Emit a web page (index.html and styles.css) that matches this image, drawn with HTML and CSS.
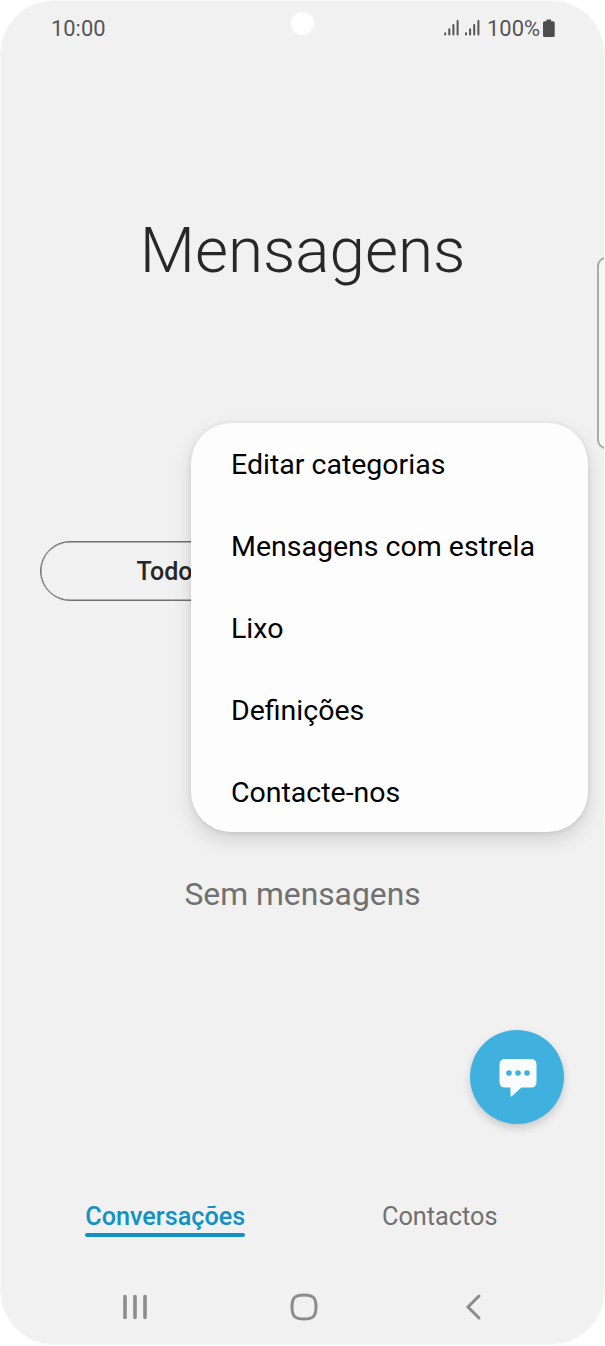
FILE: index.html
```html
<!DOCTYPE html>
<html lang="pt">
<head>
<meta charset="utf-8">
<title>Mensagens</title>
<link rel="stylesheet" href="styles.css">
</head>
<body>
<div class="screen">
  <header class="status">
    <span class="clock">10:00</span>
    <div class="indicators">
      <svg class="signals" width="38" height="18" viewBox="0 0 38 18" fill="none" stroke="#555" stroke-width="2" stroke-linecap="round">
        <path d="M2.200 14.300v1.200M6.300 10.300v5.200M10.400 6v9.500M14.600 2v13.500M23 14.300v1.200M27.100 10.300v5.200M31.200 6v9.500M35.400 2v13.500"/>
      </svg>
      <span class="percent">100%</span>
      <svg class="battery" width="12" height="18" viewBox="0 0 12 18" fill="#4d4d4d">
        <path d="M3.500 0.600h4.600v1.700H10.200q1.500 0 1.500 1.500v12.700q0 1.500-1.500 1.500H1.500Q0 18 0 16.500V3.800Q0 2.300 1.500 2.300h2z"/>
      </svg>
    </div>
    <span class="camera"></span>
  </header>
  <h1 class="title">Mensagens</h1>
  <main class="content">
    <div class="chip">Todos</div>
    <p class="empty">Sem mensagens</p>
  </main>
  <nav class="tabs">
    <div class="tab"><span class="label active">Conversações</span></div>
    <div class="tab"><span class="label">Contactos</span></div>
  </nav>
  <footer class="navbar">
    <svg class="recents" width="26" height="28" viewBox="0 0 26 28" fill="none" stroke="#8c8c8c" stroke-width="3.600" stroke-linecap="round"><path d="M3 3.500v21M13 3.500v21M23 3.500v21"/></svg>
    <svg class="home" width="28" height="28" viewBox="0 0 28 28" fill="none" stroke="#8c8c8c" stroke-width="3"><path d="M14 2c9.200 0 12 2.800 12 12s-2.800 12-12 12S2 23.200 2 14 4.800 2 14 2z"/></svg>
    <svg class="back" width="18" height="28" viewBox="0 0 18 28" fill="none" stroke="#8c8c8c" stroke-width="3" stroke-linecap="round"><path d="M15 3L4 14l11 11"/></svg>
  </footer>
  <div class="edge-handle"></div>
  <div class="menu">
    <div class="item">Editar categorias</div>
    <div class="item">Mensagens com estrela</div>
    <div class="item">Lixo</div>
    <div class="item">Definições</div>
    <div class="item">Contacte-nos</div>
  </div>
  <div class="fab">
    <svg width="38" height="38" viewBox="0 0 38 38">
      <path fill="#fafdff" d="M6 0H32q5.500 0 5.500 5.500V23q0 5.500-5.500 5.500H22.500L12.800 37.200q-1.300.8-1.300-.8V28.500H6Q.5 28.500.5 23V5.500Q.5 0 6 0z"/>
      <g fill="#40b0df"><circle cx="10" cy="14" r="2.800"/><circle cx="19" cy="14" r="2.800"/><circle cx="28" cy="14" r="2.800"/></g>
    </svg>
  </div>
</div>
</body>
</html>
```
FILE: styles.css
```css
* { box-sizing: border-box; margin: 0; padding: 0; }
body { background: #fff; font-family: Roboto, "Liberation Sans", sans-serif; }
svg { display: block; }
.screen {
  position: relative;
  display: flex;
  flex-direction: column;
  width: 605px;
  height: 1345px;
  overflow: hidden;
  border: 1px solid #f8f8f8;
  border-radius: 54px;
  background: #f1f1f1;
}
.status {
  position: relative;
  display: flex;
  justify-content: space-between;
  height: 56px;
  padding: 0 49px 2px 50px;
  align-items: center;
  font-size: 21.9px;
  color: #555;
}
.indicators { display: flex; align-items: center; }
.percent { margin: 0 3px 0 6px; }
.battery { margin-top: -1px; }
.camera {
  position: absolute;
  top: 11px;
  left: 290px;
  width: 23px;
  height: 23px;
  border-radius: 50%;
  background: #fff;
}
.title {
  height: 484px;
  padding-top: 154px;
  font-size: 63.8px;
  font-weight: 300;
  line-height: 80px;
  text-align: center;
  color: #282828;
}
.content { height: 629px; }
.chip {
  width: 262px;
  height: 60px;
  margin-left: 39px;
  border: 1px solid #707070;
  box-shadow: inset 0 0 0 .5px #707070;
  border-radius: 30px;
  font-size: 25px;
  font-weight: 500;
  line-height: 60px;
  text-align: center;
  color: #262626;
}
.empty {
  margin-top: 273px;
  font-size: 31.8px;
  line-height: 40px;
  text-align: center;
  color: #707070;
}
.tabs {
  display: flex;
  height: 100px;
  padding: 27px 28px 0;
}
.tab { flex: 1; text-align: center; }
.label {
  display: inline-block;
  height: 40px;
  font-size: 25.3px;
  line-height: 39px;
  color: #707070;
}
.tab:last-child { padding-left: 2px; }
.active {
  position: relative;
  font-weight: 500;
  font-size: 25.2px;
  color: #1093c4;
}
.active::after {
  content: "";
  position: absolute;
  left: 0;
  right: 0;
  bottom: 0;
  height: 4px;
  border-radius: 2px;
  background: #1093c4;
}
.navbar {
  display: flex;
  justify-content: space-between;
  align-items: center;
  height: 74px;
  padding: 0 122px 0 121px;
}
.home { margin-left: -5px; }
.edge-handle {
  position: absolute;
  top: 256px;
  right: -12px;
  width: 19px;
  height: 192px;
  border: 2px solid #aaa;
  border-radius: 9px;
  background: #f7f7f7;
}
.menu {
  position: absolute;
  top: 421.5px;
  left: 189.5px;
  width: 397.5px;
  height: 409.5px;
  padding: 1px 0 0 40.5px;
  border-radius: 40px;
  background: #fdfdfd;
  box-shadow: 0 8px 20px rgba(0, 0, 0, .13), 0 1px 5px rgba(0, 0, 0, .1);
  color: #000;
}
.item {
  height: 82px;
  font-size: 28.5px;
  line-height: 82px;
}
.fab {
  position: absolute;
  top: 1028.5px;
  left: 469px;
  display: flex;
  width: 94px;
  height: 94px;
  padding: 29.5px 0 0 28.5px;
  border-radius: 50%;
  background: #40b0df;
  box-shadow: 0 4px 9px rgba(0, 0, 0, .17);
}
```
